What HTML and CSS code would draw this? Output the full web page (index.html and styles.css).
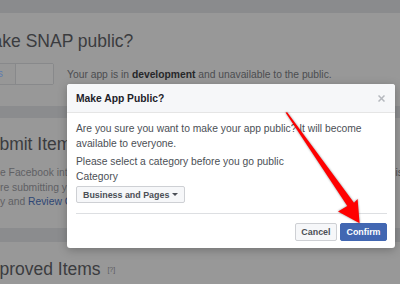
FILE: index.html
```html
<!DOCTYPE html>
<html lang="en">
<head>
<meta charset="utf-8">
<title>Make App Public</title>
<link rel="stylesheet" href="styles.css">
</head>
<body>
<div class="page">
  <div class="topbar"></div>
  <section class="card card-status">
    <h1 class="title">Make SNAP public?</h1>
    <div class="status-row">
      <div class="seg"><span class="seg-a">Apps</span><span class="seg-b"></span></div>
      <p class="status">Your app is in <b>development</b> and unavailable to the public.</p>
    </div>
  </section>
  <section class="card card-submit">
    <h1 class="title">Submit Items</h1>
    <div class="desc">
      <div class="desc-line desc-split"><span class="desc-main">e Facebook integration team before your app goes live.</span><span class="aside">is</span></div>
      <div class="desc-line">re submitting your app for review, please read our Platform Policy</div>
      <div class="desc-line">y and <a class="link" href="#">Review Guidelines</a>.</div>
    </div>
  </section>
  <section class="card card-approved">
    <h1 class="title">Approved Items <span class="help">[?]</span></h1>
  </section>
</div>

<div class="dialog">
  <div class="dialog-head">
    <span class="dialog-title">Make App Public?</span>
    <svg class="close" width="7" height="7" viewBox="0 0 7 7"><path d="M0.5 0.5L6.5 6.5M6.5 0.5L0.5 6.5" stroke="#b5b8be" stroke-width="1.5" fill="none"/></svg>
  </div>
  <div class="dialog-body">
    <p class="msg">Are you sure you want to make your app public? It will become available to everyone.</p>
    <p class="msg msg-gap">Please select a category before you go public</p>
    <div class="label">Category</div>
    <button class="select">Business and Pages<span class="caret"></span></button>
  </div>
  <div class="dialog-foot">
    <button class="btn btn-cancel">Cancel</button>
    <button class="btn btn-confirm">Confirm</button>
  </div>
</div>

<svg class="arrow" width="400" height="284" viewBox="0 0 400 284">
  <polygon points="285.5,112.5 287.2,112.3 354,202.7 357.6,199 359.6,223.2 338,211.6 347.3,206" fill="#ff0000"/>
</svg>
</body>
</html>
```

FILE: styles.css
```css
* { box-sizing: border-box; }

html, body {
  margin: 0;
  padding: 0;
  width: 400px;
  height: 284px;
  overflow: hidden;
  background: #8b8c8e;
  font-family: "Liberation Sans", Arial, sans-serif;
}

.page {
  margin-left: -30px;
  width: 430px;
}

.topbar {
  height: 13px;
  background: #8a8b8d;
}

.card {
  background: #989898;
  padding-left: 8px;
}

.card-status {
  padding-top: 18px;
  padding-bottom: 21px;
}

.card-submit {
  margin-top: 12px;
  padding-top: 16px;
  padding-bottom: 18.5px;
}

.card-approved {
  margin-top: 14px;
  padding-top: 17px;
  height: 42px;
}

.title {
  margin: 0;
  font-size: 17.5px;
  line-height: 20px;
  font-weight: normal;
  color: #3b3c3f;
  white-space: nowrap;
}

.help {
  font-size: 7px;
  color: #5a5b5e;
  vertical-align: 3px;
  margin-left: 2px;
}

.status-row {
  margin-top: 12px;
  display: flex;
  align-items: center;
  gap: 13px;
}

.seg {
  display: flex;
  height: 22px;
  border: 1px solid #88898b;
  border-radius: 2px;
}

.seg-a {
  width: 37px;
  padding-right: 12px;
  text-align: right;
  font-size: 10.3px;
  line-height: 20px;
  color: #5e7cb0;
  background: #979797;
  border-right: 1px solid #88898b;
}

.seg-b {
  width: 37px;
  background: #9b9b9b;
}

.status {
  margin: 0;
  font-size: 10.3px;
  color: #4c4d50;
  white-space: nowrap;
}

.status b {
  color: #26272a;
}

.desc {
  margin-top: 12px;
  margin-left: 22px;
  font-size: 10.3px;
  line-height: 14.5px;
  color: #5f6064;
}

.desc-line {
  white-space: nowrap;
}

.desc-split {
  display: flex;
}

.desc-main {
  flex: 1;
  min-width: 0;
  overflow: hidden;
}

.aside {
  margin-right: -3px;
  color: #4c4d50;
}

.link {
  color: #2d4675;
  text-decoration: none;
}

/* dialog */
.dialog {
  position: absolute;
  left: 67px;
  top: 84px;
  width: 328px;
  background: #ffffff;
  border-radius: 3px;
  box-shadow: 0 2px 10px rgba(0, 0, 0, 0.25);
  overflow: hidden;
}

.dialog-head {
  height: 29px;
  padding: 0 9px 0 9px;
  background: #f6f7f9;
  border-bottom: 1px solid #e5e5e5;
  display: flex;
  align-items: center;
  justify-content: space-between;
}

.dialog-title {
  font-size: 10.3px;
  font-weight: bold;
  color: #1d2129;
}

.close {
  display: block;
  margin-right: 1px;
}

.dialog-body {
  padding: 9px 8px 10px 9px;
  font-size: 10.3px;
  line-height: 14.5px;
  color: #4b4f56;
}

.msg {
  margin: 0;
  padding-right: 20px;
}

.msg-gap {
  margin-top: 4px;
}

.select {
  margin-top: 2px;
  height: 17px;
  padding: 0 6px;
  display: flex;
  align-items: center;
  font-family: inherit;
  font-size: 8.9px;
  font-weight: bold;
  color: #4b4f56;
  background: #f6f7f9;
  border: 1px solid #ced0d4;
  border-radius: 2px;
}

.caret {
  margin-left: 3px;
  width: 0;
  height: 0;
  border-left: 3px solid transparent;
  border-right: 3px solid transparent;
  border-top: 3.5px solid #4b4f56;
}

.dialog-foot {
  margin: 0 8px 0 9px;
  padding: 9px 0 7px;
  border-top: 1px solid #dddfe2;
  display: flex;
  justify-content: flex-end;
  gap: 3px;
}

.btn {
  height: 18px;
  padding: 0 5.5px;
  font-family: inherit;
  font-size: 8.9px;
  font-weight: bold;
  border-radius: 2px;
  border: 1px solid #ced0d4;
}

.btn-cancel {
  background: #f6f7f9;
  color: #4b4f56;
}

.btn-confirm {
  background: #4267b2;
  border-color: #4267b2;
  color: #ffffff;
}

.arrow {
  position: absolute;
  left: 0;
  top: 0;
  pointer-events: none;
  filter: drop-shadow(0.5px 0.5px 0.8px rgba(0, 0, 0, 0.45));
}
```
